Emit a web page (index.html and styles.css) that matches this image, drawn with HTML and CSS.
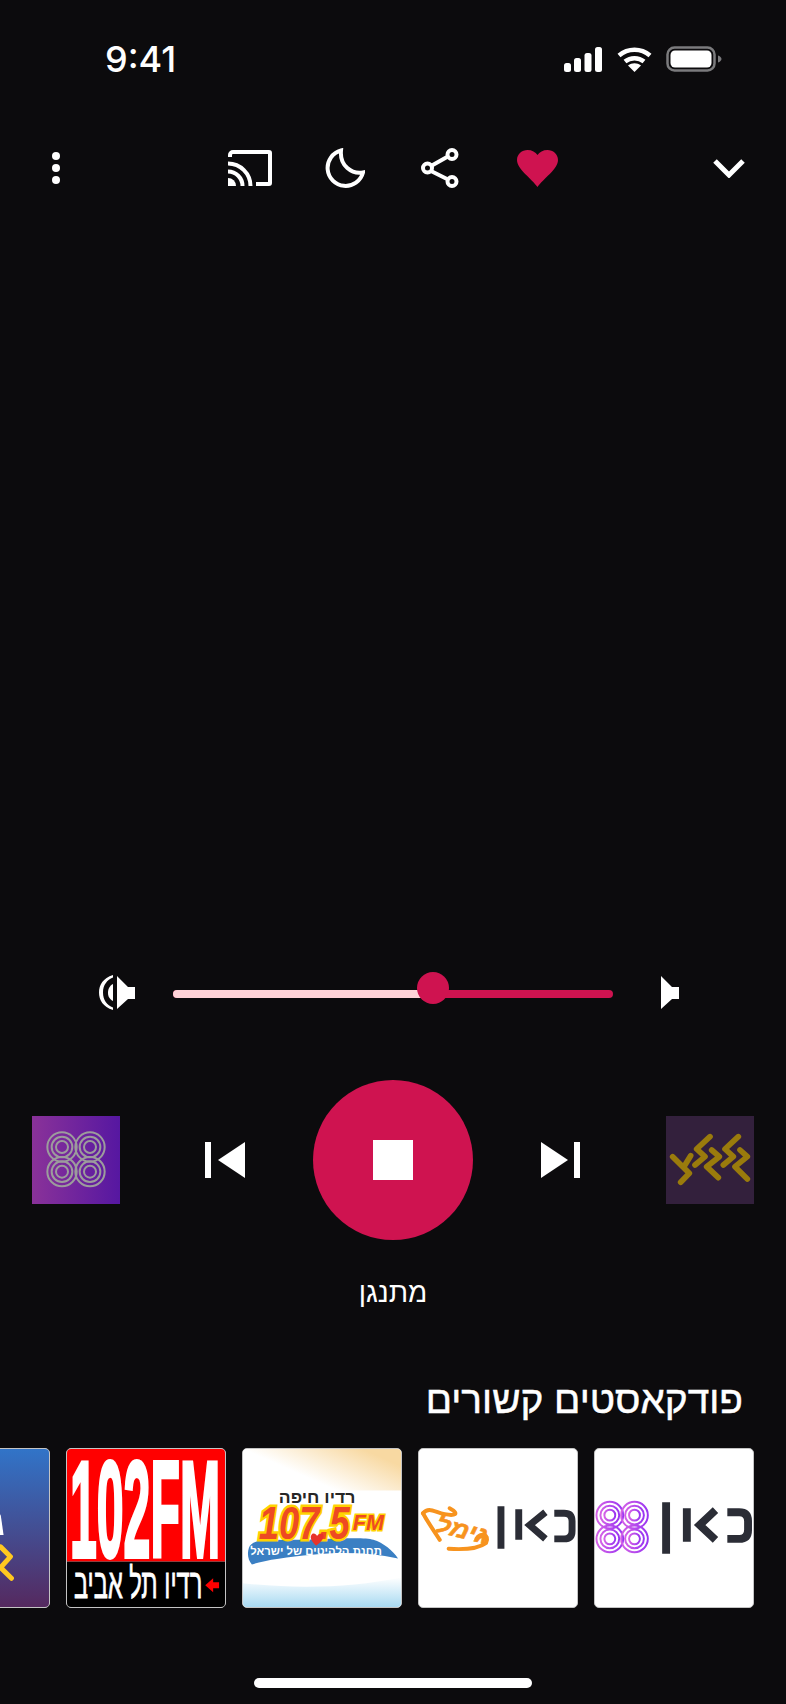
FILE: index.html
```html
<!DOCTYPE html>
<html lang="he">
<head>
  <meta charset="UTF-8">
  <meta name="viewport" content="width=device-width, initial-scale=1.0">
  <title>Player</title>
  <link rel="stylesheet" href="styles.css">
</head>
<body>
  <div class="page">
    <div class="status">
      <span class="time">9:41</span>
      <div class="status-icons">
        <svg class="signal" viewBox="0 0 38 25"><rect class="w" x="0" y="16" width="7" height="9" rx="2.5"/><rect class="w" x="10" y="11" width="7" height="14" rx="2.5"/><rect class="w" x="20.500" y="6" width="7" height="19" rx="2.5"/><rect class="w" x="31" y="0" width="7" height="25" rx="2.500"/></svg>
        <svg class="wifi" viewBox="0 0 35 25"><path class="line wifi-arc" d="M2 8.500C11 .8 24 .8 33 8.500"/><path class="line wifi-arc" d="M8 14.500C13.500 10 21.500 10 27 14.500"/><path class="w" d="M17.500 25L11 18.500C15 15.500 20 15.500 24 18.500Z"/></svg>
        <svg class="battery" viewBox="0 0 56 26"><rect class="batt-outline" x="1.500" y="1.500" width="47" height="23" rx="7"/><rect class="w" x="4.500" y="4.500" width="41" height="17" rx="4.500"/><path class="batt-cap" d="M52 9.500c2 .6 3.500 2 3.500 3.500s-1.500 2.900-3.500 3.500Z"/></svg>
      </div>
    </div>

    <div class="toolbar">
      <div class="menu-dots"><i></i><i></i><i></i></div>
      <div class="tool-group">
        <svg class="ic-cast" viewBox="0 0 44 36"><path class="line" d="M2 7V5a3 3 0 0 1 3-3h36a1 1 0 0 1 1 1v30a1 1 0 0 1-1 1H28"/><path class="line" d="M0 13.500A22.500 22.500 0 0 1 22.500 36"/><path class="line" d="M0 21.500A14.500 14.500 0 0 1 14.500 36"/><path class="w" d="M0 28a8 8 0 0 1 8 8H0Z"/></svg>
        <svg class="ic-moon" viewBox="0 0 40 40"><path class="line" d="M16 2.500A18 18 0 1 0 38 24.500C27 26.500 14.500 18 16 2.500Z"/></svg>
        <svg class="ic-share" viewBox="0 0 38 40"><path class="line" d="M26 9L10 18M10 23L26 31"/><circle class="line" cx="31" cy="6.500" r="4.500"/><circle class="line" cx="6.500" cy="20" r="4.500"/><circle class="line" cx="31" cy="33.500" r="4.500"/></svg>
        <svg class="ic-heart" viewBox="0 0 41 37"><path class="pink" d="M20.500 37C15 29 0 19 0 10 0 4 5 0 10.500 0 15 0 18.500 2 20.500 5 22.500 2 26 0 30.500 0 36 0 41 4 41 10 41 19 26 29 20.500 37Z"/></svg>
      </div>
      <svg class="ic-chevron" viewBox="0 0 32 20"><path class="line chev" d="M2 3L16 17 30 3"/></svg>
    </div>

    <div class="spacer"></div>

    <div class="volume">
      <svg class="vol-low" viewBox="0 0 36 35"><path class="w" d="M14 0C4 3 0 10 0 17.500 0 25 4 32 14 35V32.500C8 30 4 25 4 17.500 4 10 8 5 14 2.500Z"/><path class="w" d="M14 9C10 11 9 15 9 17.500 9 21 10 24 14 26Z"/><path class="w" d="M18 1L29 12H36V24H29L18 34Z"/></svg>
      <div class="track">
        <div class="track-done"></div>
        <div class="knob"></div>
      </div>
      <svg class="vol-high" viewBox="0 0 18 33"><path class="w" d="M0 0L11 11H18V23H11L0 33Z"/></svg>
    </div>

    <div class="controls">
      <svg class="side-tile" viewBox="36 33 264 264">
        <defs><linearGradient id="purple" x1="0" x2="1" y1="0" y2="0"><stop offset="0" stop-color="#8a3299"/><stop offset="1" stop-color="#5617a1"/></linearGradient></defs>
        <rect x="36" y="33" width="264" height="264" fill="url(#purple)"/>
        <g class="rings-grey">
          <circle cx="126" cy="126" r="44"/><circle cx="126" cy="126" r="31"/><circle cx="126" cy="126" r="18"/>
          <circle cx="210" cy="126" r="44"/><circle cx="210" cy="126" r="31"/><circle cx="210" cy="126" r="18"/>
          <circle cx="126" cy="200" r="44"/><circle cx="126" cy="200" r="31"/><circle cx="126" cy="200" r="18"/>
          <circle cx="210" cy="200" r="44"/><circle cx="210" cy="200" r="31"/><circle cx="210" cy="200" r="18"/>
        </g>
      </svg>
      <div class="transport">
        <svg class="skip" viewBox="0 0 40 36"><rect class="w" x="0" y="0" width="6" height="36"/><path class="w" d="M40 0V36L13 18Z"/></svg>
        <div class="stop-btn"><div class="stop-sq"></div></div>
        <svg class="skip" viewBox="0 0 40 36"><path class="w" d="M0 0V36L27 18Z"/><rect class="w" x="33" y="0" width="6" height="36"/></svg>
      </div>
      <svg class="side-tile" viewBox="48 33 264 264">
        <rect class="zig-bg" x="48" y="33" width="264" height="264"/>
        <g class="zig">
          <path d="M68 155L118 205 92 232M105 180L122 152"/>
          <path d="M180 95L140 132 165 155 135 180"/>
          <path d="M185 135L208 155 170 185 205 218"/>
          <path d="M265 95L225 132 250 155 220 180"/>
          <path d="M270 135L292 155 255 185 292 222"/>
        </g>
      </svg>
    </div>

    <div class="state-label">מתנגן</div>

    <h2 class="section-title">פודקאסטים קשורים</h2>

    <div class="podcasts">
      <!-- kan 88 -->
      <div class="pod">
        <svg viewBox="0 0 160 160">
          <defs><linearGradient id="violet" x1="0" x2="1" y1="0" y2="0"><stop offset="0" stop-color="#d562e6"/><stop offset="1" stop-color="#9a35f2"/></linearGradient></defs>
          <g class="rings-violet">
            <circle cx="15" cy="67" r="13.500"/><circle cx="15" cy="67" r="9.500"/><circle cx="15" cy="67" r="5.500"/>
            <circle cx="40" cy="67" r="13.500"/><circle cx="40" cy="67" r="9.500"/><circle cx="40" cy="67" r="5.500"/>
            <circle cx="15" cy="91" r="13.500"/><circle cx="15" cy="91" r="9.500"/><circle cx="15" cy="91" r="5.500"/>
            <circle cx="40" cy="91" r="13.500"/><circle cx="40" cy="91" r="9.500"/><circle cx="40" cy="91" r="5.500"/>
          </g>
          <path class="kan kan-big" d="M72 54V106M93 60V94"/>
          <path class="kan kan-big" d="M122 62L106 77 122 92"/>
          <path class="kan kan-big" d="M134 64H146Q155 64 155 73V82Q155 91 146 91H134"/>
        </svg>
      </div>
      <!-- kan gimel -->
      <div class="pod">
        <svg viewBox="0 0 160 160">
          <path class="gimel-swash" d="M4 65C10 58 16 64 26 66S42 66 31 60"/>
          <path class="gimel-swash" d="M4 65C10 76 16 84 21 92"/>
          <path class="gimel-swash" d="M30 101C44 102 60 101 68 95 72 86 62 84 58 91"/>
          <text class="gimel-text" transform="translate(42 90) rotate(14) scale(1.1 1)" text-anchor="middle" direction="rtl">גימל</text>
          <path class="kan" d="M83 58V101M101 61V92"/>
          <path class="kan" d="M128 64L112 77 128 91"/>
          <path class="kan" d="M137 65H147Q155 65 155 73V83Q155 91 147 91H137"/>
        </svg>
      </div>
      <!-- radio haifa -->
      <div class="pod">
        <svg viewBox="0 0 160 160">
          <defs>
            <linearGradient id="sand" gradientUnits="userSpaceOnUse" x1="110" y1="-5" x2="90" y2="40"><stop offset="0" stop-color="#f8d9a2"/><stop offset="1" stop-color="#fff"/></linearGradient>
            <linearGradient id="sky" x1="0" y1="0" x2="0" y2="1"><stop offset="0" stop-color="#fff"/><stop offset="1" stop-color="#a8daf2"/></linearGradient>
          </defs>
          <rect width="160" height="160" fill="#fff"/>
          <rect width="160" height="42" fill="url(#sand)"/>
          <path d="M0 136C60 142 110 140 160 130V160H0Z" fill="url(#sky)"/>
          <path class="swoosh" d="M6 100C8 94 16 92 30 92 70 93 120 88 132 92 142 95 152 103 157 111 130 105 100 104 70 107 45 109 20 113 9 117 5 112 4 106 6 100Z"/>
          <text class="haifa-top" transform="translate(75 55) scale(1.05 1)" text-anchor="middle" direction="rtl">רדיו חיפה</text>
          <text class="haifa-num" transform="translate(62 91) scale(.8 1)" text-anchor="middle">107.5</text>
          <text class="haifa-fm" transform="translate(127 82) scale(.95 1)" text-anchor="middle">FM</text>
          <path class="haifa-heart" d="M74 98C69 93 67 89 70 86 72 85 74 86 75 88 76 86 79 85 81 86 83 90 79 94 74 98Z"/>
          <text class="haifa-sub" transform="translate(74 107)" text-anchor="middle" direction="rtl">תחנת הלהיטים של ישראל</text>
        </svg>
      </div>
      <!-- 102fm -->
      <div class="pod pod-dark">
        <svg viewBox="0 0 160 160">
          <rect width="160" height="114" fill="#f00"/>
          <rect y="114" width="160" height="46" fill="#000"/>
          <text class="fm-num" transform="translate(79 109) scale(.349 1)" text-anchor="middle">102FM</text>
          <text class="fm-sub" transform="translate(72 151) scale(.57 1)" text-anchor="middle" direction="rtl">רדיו תל אביב</text>
          <path class="fm-arrow" d="M140 138L148 131V135H154V141H148V145Z"/>
        </svg>
      </div>
      <!-- cut off at the left edge -->
      <div class="pod">
        <svg viewBox="0 0 160 160">
          <defs><linearGradient id="dusk" x1="0" x2="0" y1="0" y2="1"><stop offset="0" stop-color="#3174c8"/><stop offset="1" stop-color="#55295f"/></linearGradient></defs>
          <rect width="160" height="160" fill="url(#dusk)"/>
          <path class="w" d="M100 87H114L111 66Z"/>
          <path class="dusk-zig" d="M111 99L121 109 111 120 122 131"/>
        </svg>
      </div>
    </div>

    <div class="home-bar"></div>
  </div>
</body>
</html>
```

FILE: styles.css
```css
* {
  box-sizing: border-box;
}
html, body {
  margin: 0;
  height: 100%;
}
body {
  background-color: #0c0b0d;
  color: #fff;
  font-family: "Liberation Sans", Arial, sans-serif;
}
.page {
  height: 1704px;
  display: flex;
  flex-direction: column;
  overflow: hidden;
}
svg {
  display: block;
  flex-shrink: 0;
}
.w { fill: #fff; }
.pink { fill: #cf1350; }
.line {
  fill: none;
  stroke: #fff;
  stroke-width: 4;
}

/* status bar */
.status {
  display: flex;
  justify-content: space-between;
  align-items: center;
  height: 30px;
  margin-top: 44px;
  padding: 0 64px 0 105px;
}
.time {
  font-family: Inter, sans-serif;
  font-size: 36px;
  font-weight: 500;
  line-height: 30px;
}
.status-icons {
  display: flex;
  align-items: center;
}
.signal { width: 38px; height: 25px; margin-right: 15px; }
.wifi { width: 35px; height: 25px; margin-right: 14px; }
.battery { width: 56px; height: 26px; }
.wifi-arc { stroke-width: 4.5; }
.batt-outline { fill: none; stroke: #7b7b7d; stroke-width: 2.5; }
.batt-cap { fill: #7b7b7d; }

/* top toolbar */
.toolbar {
  display: grid;
  grid-template-columns: 1fr auto 1fr;
  align-items: center;
  height: 40px;
  margin-top: 74px;
  padding: 0 41px;
}
.menu-dots {
  display: flex;
  flex-direction: column;
  gap: 4px;
  padding-left: 11px;
}
.menu-dots i {
  display: block;
  width: 8px;
  height: 8px;
  border-radius: 50%;
  background: #fff;
}
.tool-group {
  display: flex;
  align-items: center;
}
.ic-cast { width: 44px; height: 36px; }
.ic-moon { width: 40px; height: 40px; margin-left: 53px; }
.ic-share { width: 38px; height: 40px; margin-left: 56px; }
.ic-heart { width: 41px; height: 37px; margin-left: 58px; }
.ic-chevron { width: 32px; height: 20px; justify-self: end; }
.chev { stroke-width: 5; }

.spacer {
  flex: 1;
}

/* volume */
.volume {
  display: flex;
  align-items: center;
  height: 36px;
  padding-left: 99px;
}
.vol-low { width: 36px; height: 35px; }
.vol-high { width: 18px; height: 33px; margin-left: 48px; }
.track {
  position: relative;
  width: 440px;
  height: 8px;
  margin: 4px 0 0 38px;
  border-radius: 4px;
  background: #cf1350;
}
.track-done {
  width: 260px;
  height: 8px;
  border-radius: 4px;
  background: #ffd3d8;
}
.knob {
  position: absolute;
  left: 244px;
  top: -18px;
  width: 32px;
  height: 32px;
  border-radius: 50%;
  background: #cf1350;
}

/* transport row */
.controls {
  display: flex;
  justify-content: space-between;
  align-items: center;
  height: 160px;
  margin-top: 70px;
  padding: 0 32px;
}
.side-tile { width: 88px; height: 88px; }
.transport {
  display: flex;
  align-items: center;
  gap: 68px;
}
.skip { width: 40px; height: 36px; }
.stop-btn {
  display: flex;
  align-items: center;
  justify-content: center;
  width: 160px;
  height: 160px;
  border-radius: 50%;
  background: #cf1350;
}
.stop-sq {
  width: 40px;
  height: 40px;
  background: #fff;
}
.rings-grey circle {
  fill: none;
  stroke: #9c9c9c;
  stroke-width: 6;
}
.zig-bg { fill: #33203c; }
.zig path {
  fill: none;
  stroke: #9a7b0c;
  stroke-width: 17;
  stroke-linecap: round;
  stroke-linejoin: round;
}

.state-label {
  margin-top: 38px;
  text-align: center;
  font-size: 28px;
  line-height: 30px;
}
.section-title {
  margin: 70px 43px 26px 0;
  text-align: right;
  font-size: 38.800px;
  font-weight: 400;
  line-height: 44px;
  -webkit-text-stroke: 0.5px #fff;
}

/* podcasts */
.podcasts {
  direction: rtl;
  display: flex;
  gap: 16px;
  padding-right: 32px;
}
.pod {
  flex: 0 0 160px;
  width: 160px;
  height: 160px;
  overflow: hidden;
  border: 1px solid #c4c4c4;
  border-radius: 5px;
  background: #fff;
}
.pod svg {
  width: 100%;
  height: 100%;
}

/* station logos */
.kan {
  fill: none;
  stroke: #2b2d36;
  stroke-width: 7;
}
.kan-big { stroke-width: 8; }
.rings-violet circle {
  fill: none;
  stroke: url(#violet);
  stroke-width: 2;
}
.gimel-swash {
  fill: none;
  stroke: #f7931e;
  stroke-width: 4;
  stroke-linecap: round;
}
.gimel-text {
  fill: #f7931e;
  stroke: #f7931e;
  stroke-width: 0.6;
  font-size: 24px;
  font-weight: 700;
  font-style: italic;
}
.swoosh { fill: #3a7fc3; }
.haifa-top {
  fill: #262626;
  font-size: 17px;
  font-weight: 700;
}
.haifa-num {
  fill: #ee4a22;
  stroke: #ffd200;
  stroke-width: 5;
  paint-order: stroke;
  font-size: 46px;
  font-weight: 700;
  font-style: italic;
}
.haifa-fm {
  fill: #ee4a22;
  stroke: #ffd200;
  stroke-width: 3;
  paint-order: stroke;
  font-size: 23px;
  font-weight: 700;
  font-style: italic;
}
.haifa-heart { fill: #e8332a; }
.haifa-sub {
  fill: #fff;
  font-size: 11.500px;
  font-weight: 700;
}
.fm-num {
  fill: #fff;
  stroke: #fff;
  stroke-width: 4;
  font-size: 140px;
  font-weight: 700;
}
.fm-sub {
  fill: #fff;
  stroke: #fff;
  stroke-width: 0.8;
  font-size: 42px;
}
.fm-arrow { fill: #f00; }
.dusk-zig {
  fill: none;
  stroke: #ffc820;
  stroke-width: 5;
  stroke-linecap: round;
  stroke-linejoin: round;
}

.home-bar {
  width: 278px;
  height: 10px;
  margin: 70px auto 16px;
  border-radius: 5px;
  background: #fff;
}
```
